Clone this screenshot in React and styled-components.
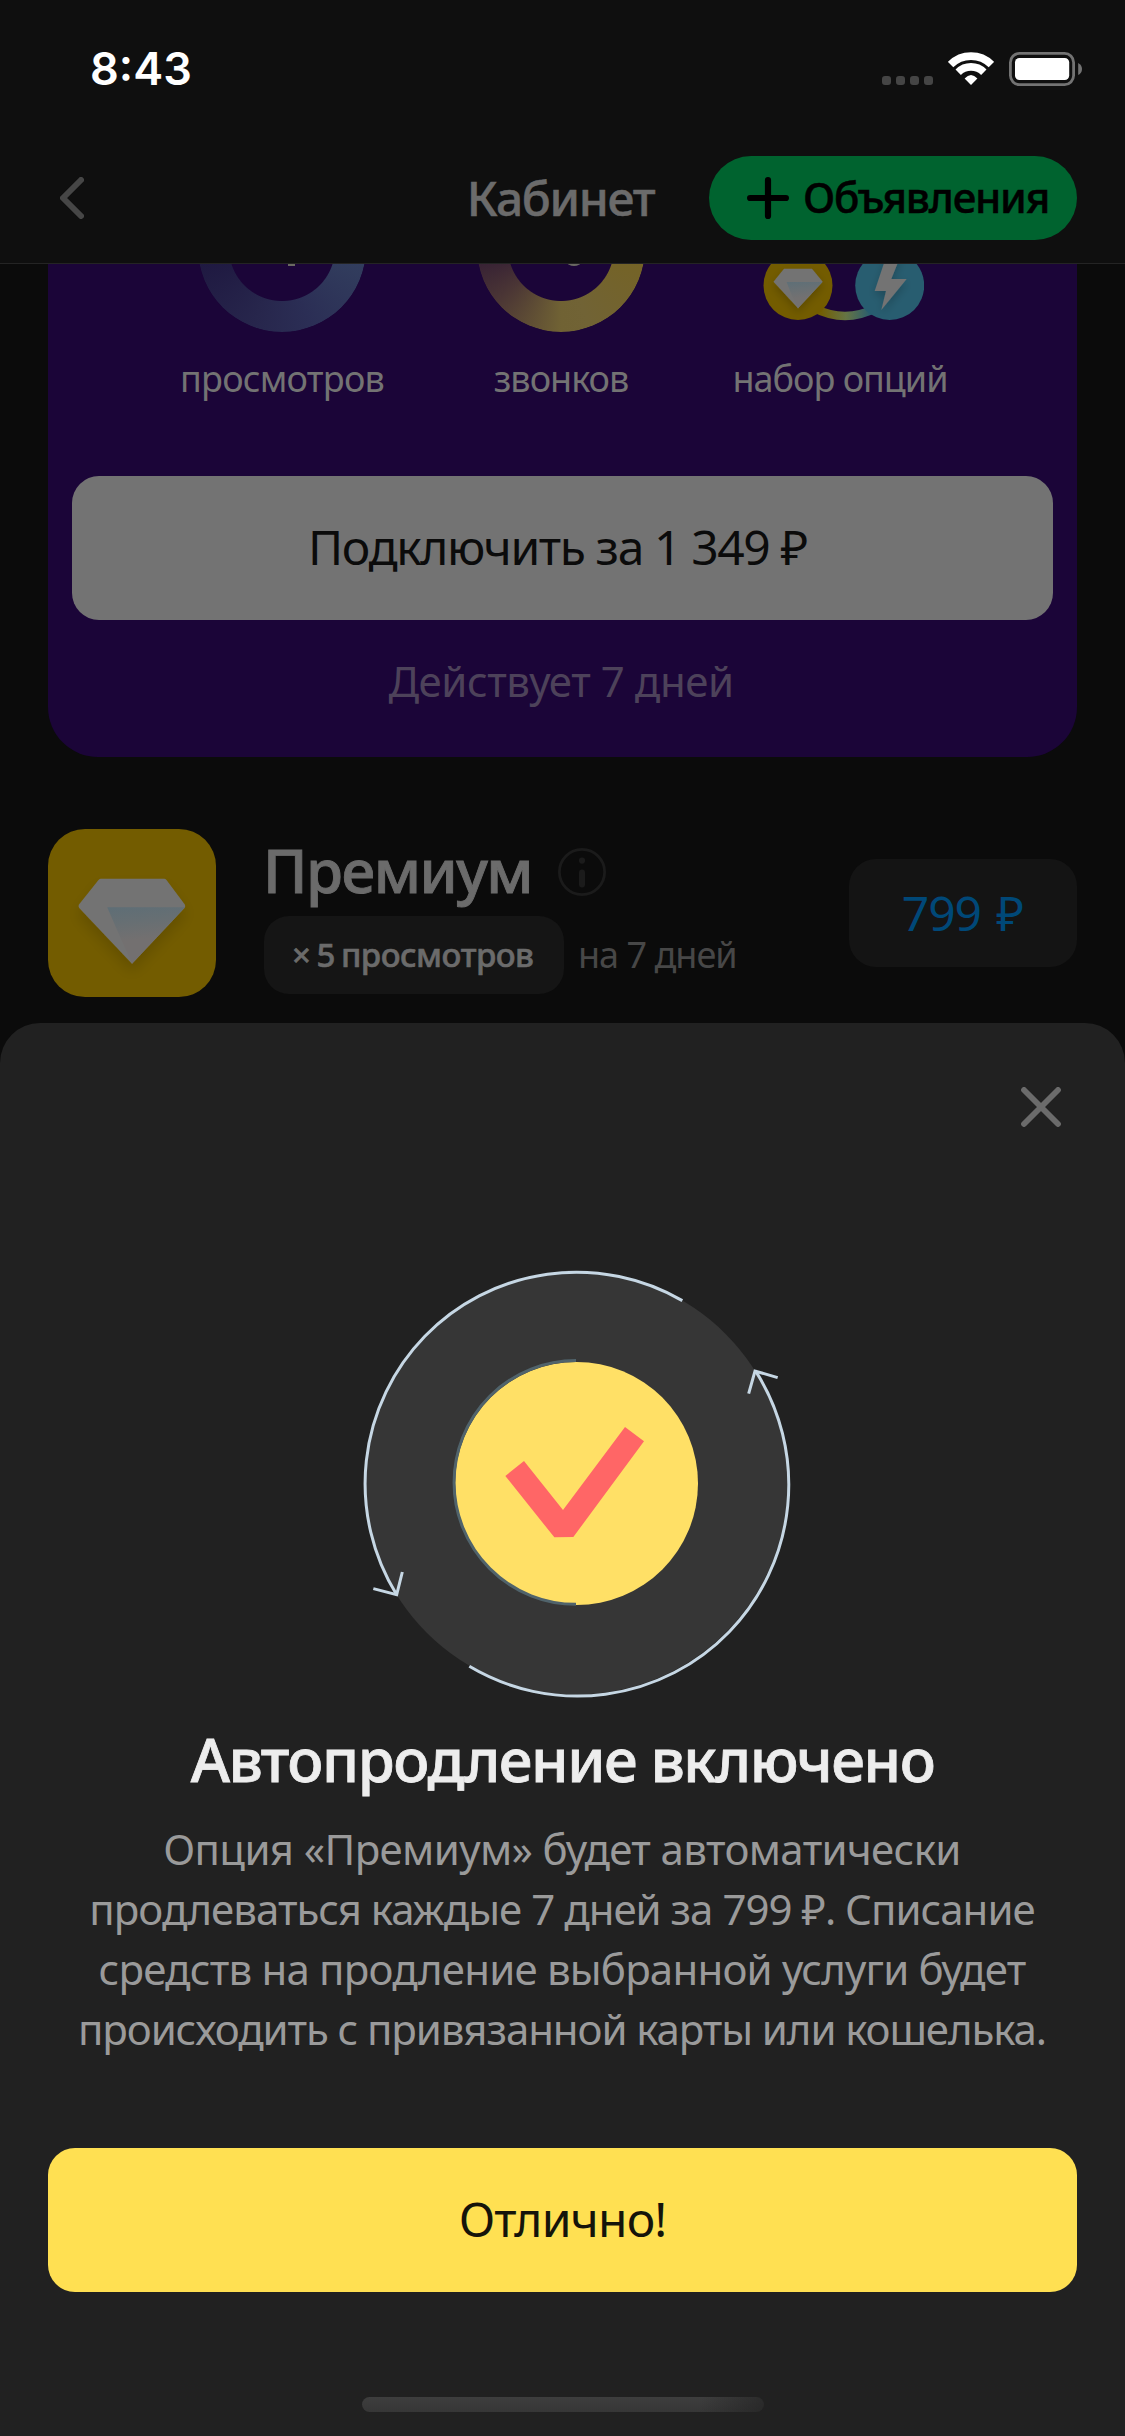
import React from "react";
import styled, { createGlobalStyle } from "styled-components";

const GlobalStyle = createGlobalStyle`
  *, *::before, *::after { box-sizing: border-box; }
  body { margin: 0; background: #0b0b0b; }
  button { border: 0; margin: 0; padding: 0; font: inherit; background: none; }
  svg { display: block; flex: none; }
`;

const Screen = styled.main`
  width: 1125px;
  height: 2436px;
  display: flex;
  flex-direction: column;
  overflow: hidden;
  background: #0b0b0b;
  font-family: "Noto Sans", "Open Sans", sans-serif;
`;

/* Text whose tracking and stem weight depend on the label */
const Label = styled.span`
  letter-spacing: ${(p) => p.$track || 0}px;
  word-spacing: ${(p) => p.$word || 0}px;
  -webkit-text-stroke: ${(p) => p.$stem || 0}px currentColor;
  white-space: nowrap;
`;

const StatusBar = styled.div`
  height: 132px;
  padding: 6px 43px 0 90px;
  display: flex;
  align-items: center;
  justify-content: space-between;
  background: #0f0f0f;
`;

const Clock = styled.time`
  font: 600 45px/54px Inter, "Liberation Sans", sans-serif;
  color: #fff;
`;

const StatusIcons = styled.div`
  display: flex;
  align-items: center;
  gap: 15px;
`;

const SignalDots = styled.div`
  display: flex;
  gap: 5px;
  margin-top: 23px;
`;

const SignalDot = styled.i`
  width: 9px;
  height: 9px;
  border-radius: 3px;
  background: #454545;
`;

const NavBar = styled.header`
  height: 132px;
  padding: 0 48px;
  display: grid;
  grid-template-columns: 1fr auto 1fr;
  align-items: center;
  background: #0f0f0f;
  border-bottom: 1px solid #242424;
`;

const BackButton = styled.button`
  justify-self: start;
  padding-left: 12px;
`;

const NavTitle = styled.h1`
  margin: 0;
  padding-right: 4px;
  font-size: 48px;
  font-weight: 500;
  line-height: 60px;
  color: #6b6b6b;
`;

const AddButton = styled.button`
  justify-self: end;
  width: 368px;
  height: 84px;
  padding-left: 38px;
  display: flex;
  align-items: center;
  gap: 14px;
  border-radius: 42px;
  background: #00632f;
  color: #000;
  font-size: 42px;
  font-weight: 500;
  line-height: 56px;
  span { padding-bottom: 1px; }
`;

const Feed = styled.section`
  height: 759px;
  flex: none;
  padding: 0 48px;
  overflow: hidden;
`;

const PackageCard = styled.article`
  margin-top: -100px;
  height: 593px;
  padding: 0 24px;
  display: flex;
  flex-direction: column;
  align-items: center;
  border-radius: 0 0 50px 50px;
  background: #1b0538;
`;

const Benefits = styled.div`
  margin-right: 3px;
  display: grid;
  grid-template-columns: repeat(3, 279px);
`;

const Benefit = styled.div`
  display: flex;
  flex-direction: column;
  align-items: center;
  gap: 23px;
  font-size: 36px;
  line-height: 48px;
  color: #737373;
`;

const Gauge = styled.div`
  display: grid;
  > * { grid-area: 1 / 1; }
`;

const Ring = styled.div`
  width: 168px;
  height: 168px;
  border-radius: 50%;
  background: conic-gradient(${(p) => p.$stops});
  mask: radial-gradient(circle, transparent 52.5px, #000 53.5px);
`;

const GaugeMark = styled.i`
  width: ${(p) => p.$width}px;
  height: 4px;
  margin: 97.5px 0 0 ${(p) => p.$left}px;
  border-radius: ${(p) => (p.$round ? "0 0 7px 7px / 0 0 4px 4px" : "0")};
  background: #6a6a62;
`;

const ConnectButton = styled.button`
  width: 100%;
  height: 144px;
  margin-top: 73px;
  padding: 0 10px 3px 0;
  border-radius: 27px;
  background: #737373;
  color: #0b0b0b;
  font-size: 48px;
`;

const Validity = styled.p`
  margin: 31px 3px 0 0;
  font-size: 42px;
  line-height: 60px;
  color: #4d425a;
`;

const OptionRow = styled.article`
  height: 168px;
  margin-top: 72px;
  display: flex;
  align-items: center;
`;

const OptionIcon = styled.div`
  width: 168px;
  height: 168px;
  border-radius: 37px;
  background: #735c00;
  overflow: hidden;
`;

const OptionInfo = styled.div`
  height: 168px;
  margin-left: 47px;
  flex: 1;
  display: flex;
  flex-direction: column;
  justify-content: space-between;
`;

const OptionTitle = styled.h2`
  margin: -1px 0 0;
  display: flex;
  align-items: center;
  gap: 26px;
  font-size: 60px;
  font-weight: 500;
  line-height: 84px;
  color: #6b6b6b;
  svg { margin-top: 3px; }
`;

const OptionMeta = styled.div`
  margin: 0 0 3px 1px;
  display: flex;
  align-items: center;
  gap: 14px;
  font-size: 36px;
  line-height: 48px;
  color: #474747;
`;

const Chip = styled.span`
  width: 300px;
  height: 78px;
  padding: 0 0 1px 28px;
  display: flex;
  align-items: center;
  border-radius: 25px;
  background: #151515;
  color: #6b6b6b;
  font-size: 33px;
  font-weight: 500;
`;

const Duration = styled.span`
  padding-bottom: 1px;
`;

const PriceButton = styled.button`
  width: 228px;
  height: 108px;
  padding: 0 1px 2px 0;
  border-radius: 27px;
  background: #141414;
  color: #004878;
  font-size: 48px;
`;

const Sheet = styled.section`
  flex: 1;
  padding: 64px 48px 24px;
  display: flex;
  flex-direction: column;
  align-items: center;
  border-radius: 40px 40px 0 0;
  background: #212121;
`;

const CloseButton = styled.button`
  align-self: flex-end;
  margin-right: 16px;
`;

const Illustration = styled.div`
  margin: 123px 0 0 25px;
`;

const SheetTitle = styled.h2`
  margin: 7px 0 0;
  font-size: 60px;
  font-weight: 500;
  line-height: 84px;
  color: #ededed;
`;

const SheetText = styled.p`
  margin: 18px 1px 0 0;
  display: flex;
  flex-direction: column;
  align-items: center;
  font-size: 42px;
  line-height: 60px;
  color: #9a9a9a;
`;

const ConfirmButton = styled.button`
  width: 100%;
  height: 144px;
  margin-top: auto;
  padding-bottom: 3px;
  border-radius: 27px;
  background: #ffe052;
  color: #15140a;
  font-size: 48px;
`;

const HomeIndicator = styled.div`
  width: 402px;
  height: 15px;
  margin: 105px 0 0 1px;
  border-radius: 8px;
  background:
    linear-gradient(100deg, transparent 84%, #212121a8 100%),
    linear-gradient(#3e3e3e, #363636);
`;

const WifiIcon = () => (
  <svg width="46" height="34" viewBox="948 52 46 34">
    <g fill="none" stroke="#fff" strokeWidth="7.6">
      <path d="M950.6 64.6A28.9 28.9 0 0 1 991.4 64.6" />
      <path d="M958.2 72.2A18.1 18.1 0 0 1 983.8 72.2" />
    </g>
    <path d="M971 85L964.6 78.6Q971 71.4 977.4 78.6Z" fill="#fff" />
  </svg>
);

const BatteryIcon = () => (
  <svg width="73" height="34" viewBox="1009 52 73 34">
    <rect x="1010.4" y="53.4" width="63.2" height="31.2" rx="9" fill="none" stroke="#737373" strokeWidth="2.8" />
    <rect x="1015" y="58" width="54.2" height="22" rx="4.5" fill="#fff" />
    <path d="M1078.2 63Q1082 65 1082 69T1078.2 75Z" fill="#737373" />
  </svg>
);

const BackIcon = () => (
  <svg width="24" height="42" viewBox="0 0 24 42" fill="none" stroke="#464646" strokeWidth="6" strokeLinecap="round" strokeLinejoin="round">
    <path d="M21 3L3 21L21 39" />
  </svg>
);

const PlusIcon = () => (
  <svg width="42" height="42" viewBox="0 0 42 42" stroke="#000" strokeWidth="6.2" strokeLinecap="round">
    <path d="M21 3.1V38.9M3.1 21H38.9" />
  </svg>
);

const InfoIcon = () => (
  <svg width="48" height="48" viewBox="0 0 48 48" fill="none" stroke="#1b1b1b">
    <circle cx="24" cy="24" r="22.6" strokeWidth="2.8" />
    <circle cx="24" cy="12.6" r="3.1" fill="#1b1b1b" stroke="none" />
    <path d="M24 24.5V36.5" strokeWidth="6" strokeLinecap="round" />
  </svg>
);

const CloseIcon = () => (
  <svg width="40" height="40" viewBox="0 0 40 40" stroke="#6b6b6b" strokeWidth="5.8" strokeLinecap="round">
    <path d="M3 3L37 37M37 3L3 37" />
  </svg>
);

const OptionSetIcon = () => (
  <svg width="168" height="168" viewBox="757 164 168 168">
    <defs>
      <linearGradient id="link" x1="822" x2="872" y1="0" y2="0" gradientUnits="userSpaceOnUse">
        <stop offset="0" stopColor="#735f04" />
        <stop offset=".5" stopColor="#667444" />
        <stop offset="1" stopColor="#285d70" />
      </linearGradient>
      <linearGradient id="facetSmall" x1="0" x2=".15" y1="0" y2="1">
        <stop offset="0" stopColor="#5e6f77" />
        <stop offset=".65" stopColor="#737171" />
      </linearGradient>
      <filter id="shade" x="-30%" y="-30%" width="160%" height="170%">
        <feDropShadow dx="0" dy="4" stdDeviation="4" floodColor="#000" floodOpacity=".2" />
      </filter>
    </defs>
    <path d="M815 308Q846 324 877 308" fill="none" stroke="url(#link)" strokeWidth="8.5" />
    <circle cx="799" cy="285.5" r="34.5" fill="#735c00" />
    <circle cx="890.7" cy="285.5" r="34.5" fill="#285d70" />
    <g filter="url(#shade)">
      <path d="M785 268.7H813L823.7 281.7L799 308.3L774.5 281.7Z" fill="#737373" />
      <path d="M887.7 255H902L892.3 279H907.7L882.3 310L887 291H875.7Z" fill="#737373" />
    </g>
    <path d="M787.6 282H823.4L799 308.3Q792 295 787.6 282Z" fill="url(#facetSmall)" />
  </svg>
);

const DiamondIcon = () => (
  <svg width="168" height="168" viewBox="48 829 168 168">
    <defs>
      <linearGradient id="facet" x1="0" x2=".15" y1="0" y2="1">
        <stop offset="0" stopColor="#5e6e76" />
        <stop offset=".3" stopColor="#676f73" />
        <stop offset=".62" stopColor="#737070" />
      </linearGradient>
      <filter id="glow" x="-30%" y="-30%" width="160%" height="170%">
        <feDropShadow dx="0" dy="8" stdDeviation="7" floodColor="#000" floodOpacity=".14" />
      </filter>
    </defs>
    <path d="M101 878.7H164Q165.5 878.7 166.5 880L184.8 904.5Q185.8 906.3 184.5 908L132 963.7L79.2 908Q78 906.3 79 904.5L98.5 880Q99.5 878.7 101 878.7Z" fill="#737373" filter="url(#glow)" />
    <path d="M107.2 907.2H185L132 963.7Q120 937 107.2 907.2Z" fill="url(#facet)" />
  </svg>
);

const RenewalArt = () => (
  <svg width="470" height="460" viewBox="0 0 1410 1380" fill="none">
    <circle cx="708.5" cy="700" r="634" fill="#363636" />
    <g stroke="#c6d7e4" strokeWidth="9">
      <path d="M1027 152A634 634 0 0 0 170 1034" />
      <path d="M388 1249A634 634 0 0 0 1246 362" />
      <path d="M1226 431L1245 363L1313 383" />
      <path d="M100 1016L170 1034L187 966" />
    </g>
    <circle cx="709.5" cy="700.5" r="364.5" fill="#ffe066" />
    <path d="M708 331.5A365.75 365.75 0 0 0 708 1063" stroke="#50636b" strokeWidth="9" />
    <path d="M496 678L552 633L669 780L855 531L912 574L700 861L643 862Z" fill="#ff6666" />
  </svg>
);

const VIEWS_STOPS =
  "from 0deg, #36486a 0deg, #33405f 90deg, #2b2e55 160deg, #27264c 200deg, #1f1941 260deg, #1b0538 320deg";
const CALLS_STOPS =
  "from 0deg, #756322 0deg, #756324 90deg, #716335 160deg, #706234 180deg, #4b3635 230deg, #2a1434 280deg, #1b0538 310deg";

const SHEET_LINES = [
  { text: "Опция «Премиум» будет автоматически", track: -0.63 },
  { text: "продлеваться каждые 7 дней за 799 ₽. Списание", track: -0.99 },
  { text: "средств на продление выбранной услуги будет", track: -0.8 },
  { text: "происходить с привязанной карты или кошелька.", track: -1.1 },
];

export default function App() {
  return (
    <Screen>
      <GlobalStyle />
      <StatusBar>
        <Clock>8:43</Clock>
        <StatusIcons>
          <SignalDots>
            {[0, 1, 2, 3].map((dot) => (
              <SignalDot key={dot} />
            ))}
          </SignalDots>
          <WifiIcon />
          <BatteryIcon />
        </StatusIcons>
      </StatusBar>

      <NavBar>
        <BackButton aria-label="Назад">
          <BackIcon />
        </BackButton>
        <NavTitle>
          <Label $track={-1.33} $stem={0.5}>Кабинет</Label>
        </NavTitle>
        <AddButton>
          <PlusIcon />
          <Label $track={-1.2} $stem={0.5}>Объявления</Label>
        </AddButton>
      </NavBar>

      <Feed>
        <PackageCard>
          <Benefits>
            <Benefit>
              <Gauge>
                <Ring $stops={VIEWS_STOPS} />
                <GaugeMark $width={7} $left={90} />
              </Gauge>
              <Label $track={-0.78}>просмотров</Label>
            </Benefit>
            <Benefit>
              <Gauge>
                <Ring $stops={CALLS_STOPS} />
                <GaugeMark $width={14} $left={90} $round />
              </Gauge>
              <Label $track={-1}>звонков</Label>
            </Benefit>
            <Benefit>
              <OptionSetIcon />
              <Label $track={-1}>набор опций</Label>
            </Benefit>
          </Benefits>
          <ConnectButton>
            <Label $track={-1.4}>Подключить за 1 349 ₽</Label>
          </ConnectButton>
          <Validity>
            <Label $track={-0.43}>Действует 7 дней</Label>
          </Validity>
        </PackageCard>

        <OptionRow>
          <OptionIcon>
            <DiamondIcon />
          </OptionIcon>
          <OptionInfo>
            <OptionTitle>
              <Label $track={-1.5} $stem={0.9}>Премиум</Label>
              <InfoIcon />
            </OptionTitle>
            <OptionMeta>
              <Chip>
                <Label $track={-0.5} $word={-2} $stem={0.6}>× 5 просмотров</Label>
              </Chip>
              <Duration>
                <Label $track={-1}>на 7 дней</Label>
              </Duration>
            </OptionMeta>
          </OptionInfo>
          <PriceButton>
            <Label $track={-1.1} $word={4}>799 ₽</Label>
          </PriceButton>
        </OptionRow>
      </Feed>

      <Sheet>
        <CloseButton aria-label="Закрыть">
          <CloseIcon />
        </CloseButton>
        <Illustration>
          <RenewalArt />
        </Illustration>
        <SheetTitle>
          <Label $track={-1.43} $stem={0.8}>Автопродление включено</Label>
        </SheetTitle>
        <SheetText>
          {SHEET_LINES.map((line) => (
            <Label key={line.text} $track={line.track}>
              {line.text}
            </Label>
          ))}
        </SheetText>
        <ConfirmButton>
          <Label $track={-0.86}>Отлично!</Label>
        </ConfirmButton>
        <HomeIndicator />
      </Sheet>
    </Screen>
  );
}
